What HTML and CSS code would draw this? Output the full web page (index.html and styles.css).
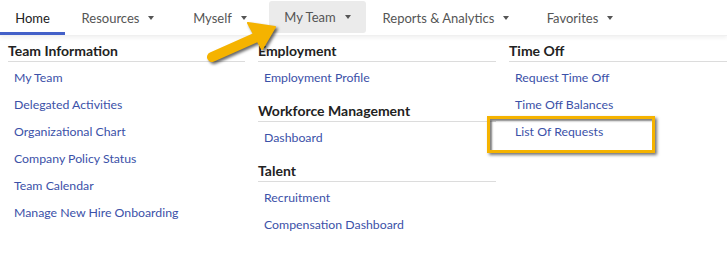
FILE: index.html
```html
<!DOCTYPE html>
<html lang="en">
<head>
  <meta charset="UTF-8" />
  <title>My Team Menu</title>
  <link rel="stylesheet" href="styles.css">
</head>
<body>
  <nav class="nav">
    <div class="tab tab-home active">Home</div>
    <div class="tab tab-resources">Resources <span class="caret"></span></div>
    <div class="tab tab-myself">Myself <span class="caret"></span></div>
    <div class="tab tab-team open">My Team <span class="caret"></span></div>
    <div class="tab tab-reports">Reports &amp; Analytics <span class="caret"></span></div>
    <div class="tab tab-favorites">Favorites <span class="caret"></span></div>
  </nav>

  <div class="menu">
    <div class="menu-col">
      <h3 class="menu-title">Team Information</h3>
      <ul class="menu-links">
        <li><a href="#">My Team</a></li>
        <li><a href="#">Delegated Activities</a></li>
        <li><a href="#">Organizational Chart</a></li>
        <li><a href="#">Company Policy Status</a></li>
        <li><a href="#">Team Calendar</a></li>
        <li><a href="#">Manage New Hire Onboarding</a></li>
      </ul>
    </div>

    <div class="menu-col">
      <h3 class="menu-title">Employment</h3>
      <ul class="menu-links">
        <li><a href="#">Employment Profile</a></li>
      </ul>
      <h3 class="menu-title spaced">Workforce Management</h3>
      <ul class="menu-links">
        <li><a href="#">Dashboard</a></li>
      </ul>
      <h3 class="menu-title spaced">Talent</h3>
      <ul class="menu-links">
        <li><a href="#">Recruitment</a></li>
        <li><a href="#">Compensation Dashboard</a></li>
      </ul>
    </div>

    <div class="menu-col">
      <h3 class="menu-title">Time Off</h3>
      <ul class="menu-links">
        <li><a href="#">Request Time Off</a></li>
        <li><a href="#">Time Off Balances</a></li>
        <li class="highlighted"><a href="#">List Of Requests</a><span class="highlight-box"></span></li>
      </ul>
    </div>
  </div>

  <!-- callout arrow pointing at the My Team tab -->
  <svg class="callout-arrow" width="90" height="50" viewBox="200 20 90 50">
    <line x1="212" y1="57" x2="257" y2="37" stroke="#f5b300" stroke-width="10" stroke-linecap="round"/>
    <polygon points="275,27 262,49 248,23" fill="#f5b300" stroke="#f5b300" stroke-width="2" stroke-linejoin="round"/>
  </svg>
</body>
</html>
```

FILE: styles.css
```css
* {
  margin: 0;
  padding: 0;
  box-sizing: border-box;
}

body {
  font-family: Lato, 'Open Sans', sans-serif;
  background: #ffffff;
  color: #222;
  position: relative;
  min-height: 100vh;
}

.nav {
  display: flex;
  height: 36px;
  align-items: stretch;
  box-shadow: 0 2px 4px rgba(0, 0, 0, 0.06);
  border-bottom: 1px solid #f0f0f0;
}

.tab {
  display: flex;
  align-items: center;
  justify-content: center;
  gap: 7px;
  font-size: 13px;
  color: #555;
  border-bottom: 3px solid transparent;
  padding-top: 3px;
}

.tab-home { width: 65px; }
.tab-resources { width: 106px; }
.tab-myself { width: 98px; }
.tab-team { width: 97px; }
.tab-reports { width: 160px; }
.tab-favorites { width: 108px; }

.tab.active {
  color: #222;
  border-bottom-color: #4360c8;
}

.tab.open {
  background: #ebebeb;
  border-radius: 3px;
  margin-top: 1px;
  margin-bottom: 2px;
  border-bottom: none;
  padding-top: 0;
}

.caret {
  width: 0;
  height: 0;
  border-left: 3px solid transparent;
  border-right: 3px solid transparent;
  border-top: 4px solid #555;
  margin-left: 2px;
}

.menu {
  display: grid;
  grid-template-columns: 237px 238px 1fr;
  column-gap: 13px;
  padding: 5px 0 0 8px;
}

.menu-title {
  font-size: 14px;
  font-weight: 700;
  line-height: 20px;
  color: #222;
  border-bottom: 1px solid #dcdcdc;
}

.menu-title.spaced {
  margin-top: 12px;
}

.menu-links {
  list-style: none;
}

.menu-links li {
  height: 27px;
  line-height: 27px;
  padding-left: 6px;
}

.menu-links a {
  font-size: 12.3px;
  color: #3b51a8;
  text-decoration: none;
}

.highlighted {
  position: relative;
}

.highlight-box {
  position: absolute;
  left: -22px;
  top: 0;
  width: 168px;
  height: 37px;
  border: 3px solid #f5b300;
  box-shadow: 2px 2px 3px rgba(0, 0, 0, 0.55), inset 2px 2px 2px rgba(0, 0, 0, 0.5);
}

.callout-arrow {
  position: absolute;
  left: 200px;
  top: 20px;
  filter: drop-shadow(2px 2px 1.5px rgba(0, 0, 0, 0.6));
}
```
